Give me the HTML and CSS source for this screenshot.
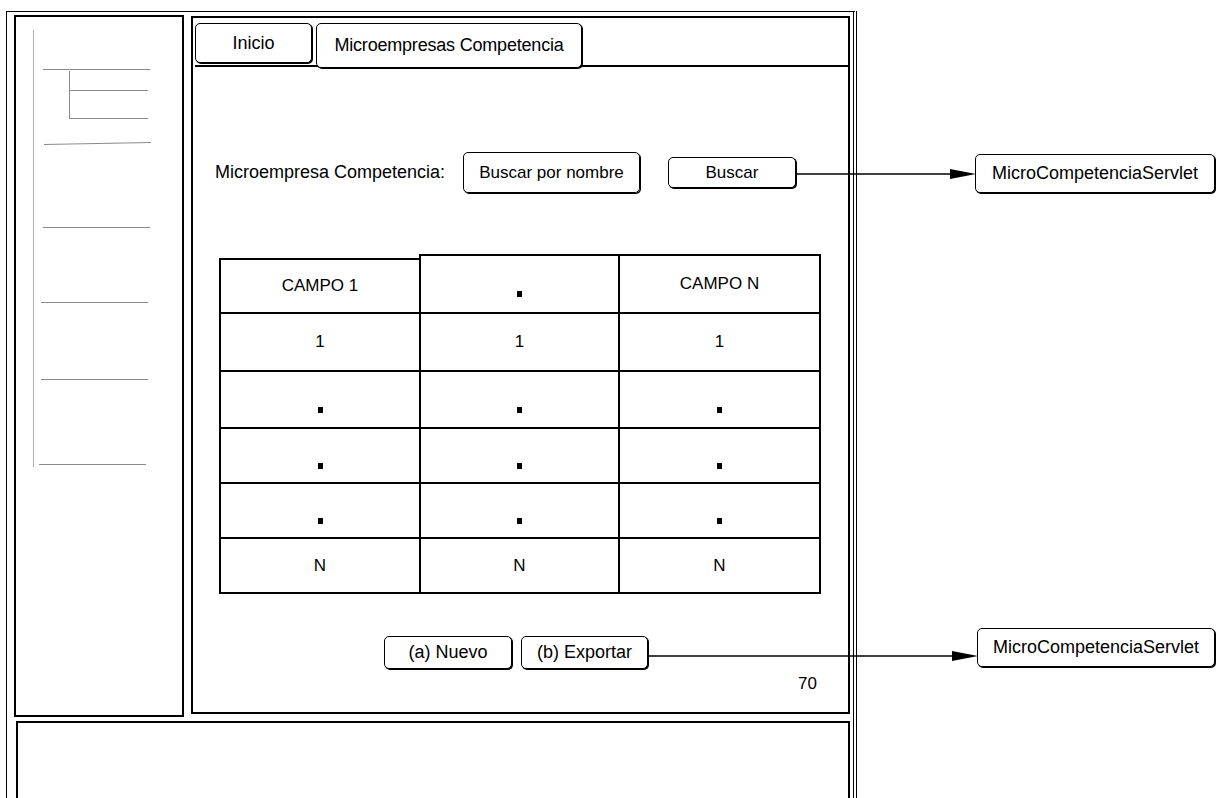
FILE: index.html
```html
<!DOCTYPE html>
<html lang="es">
<head>
    <meta charset="UTF-8">
    <meta name="viewport" content="width=device-width, initial-scale=1.0">
    <title>Microempresas Competencia</title>
    <link rel="stylesheet" href="styles.css">
</head>
<body>
    <div class="page">
        <div class="frame">
            <div class="top">
                <!-- Menu lateral (boceto) -->
                <aside class="sidebar">
                    <svg class="sketch" width="166" height="698" viewBox="16 17 166 698">
                        <path class="trunk" d="M33.5 30 V467"/>
                        <path d="M43 69.5 H150"/>
                        <path d="M69.5 71 V119"/>
                        <path d="M69 90.5 H148"/>
                        <path d="M69 118.5 H148"/>
                        <path d="M44 144.5 L151 142.5"/>
                        <path d="M43 227.5 H150"/>
                        <path d="M41 302.5 H148"/>
                        <path d="M41 379.5 H148"/>
                        <path d="M39 464.5 H146"/>
                    </svg>
                </aside>

                <main class="panel">
                    <nav class="tabs">
                        <span class="tab tab-home">Inicio</span>
                        <span class="tab tab-active">Microempresas Competencia</span>
                    </nav>

                    <div class="search">
                        <label class="search-label">Microempresa Competencia:</label>
                        <span class="field">Buscar por nombre</span>
                        <button class="btn btn-search">Buscar</button>
                    </div>

                    <div class="grid">
                        <div class="col col-first">
                            <div class="cell head">CAMPO 1</div>
                            <div class="cell">1</div>
                            <div class="cell"><i class="dot"></i></div>
                            <div class="cell"><i class="dot"></i></div>
                            <div class="cell"><i class="dot"></i></div>
                            <div class="cell">N</div>
                        </div>
                        <div class="col col-mid">
                            <div class="cell head"><i class="dot"></i></div>
                            <div class="cell">1</div>
                            <div class="cell"><i class="dot"></i></div>
                            <div class="cell"><i class="dot"></i></div>
                            <div class="cell"><i class="dot"></i></div>
                            <div class="cell">N</div>
                        </div>
                        <div class="col col-last">
                            <div class="cell head">CAMPO N</div>
                            <div class="cell">1</div>
                            <div class="cell"><i class="dot"></i></div>
                            <div class="cell"><i class="dot"></i></div>
                            <div class="cell"><i class="dot"></i></div>
                            <div class="cell">N</div>
                        </div>
                    </div>

                    <div class="actions">
                        <button class="btn btn-new">(a) Nuevo</button>
                        <button class="btn btn-export">(b) Exportar</button>
                    </div>

                    <div class="page-num">70</div>
                </main>
            </div>

            <footer class="footer"></footer>
        </div>

        <!-- Flechas hacia el servlet -->
        <svg class="links" width="1218" height="798" viewBox="0 0 1218 798">
            <line x1="796" y1="174" x2="952" y2="174"/>
            <polygon points="950,169 976,174 950,179"/>
            <line x1="649" y1="656" x2="955" y2="656"/>
            <polygon points="952,651 978,656 952,661"/>
        </svg>
        <div class="node node-search">MicroCompetenciaServlet</div>
        <div class="node node-export">MicroCompetenciaServlet</div>
    </div>
</body>
</html>
```

FILE: styles.css
```css
/* Boceto de pantalla */
body {
    margin: 0;
    background: #fff;
    color: #000;
    font-family: "Liberation Sans", Arial, sans-serif;
    font-size: 17px;
}

.page {
    position: relative;
    width: 1218px;
    height: 798px;
    overflow: hidden;
}

.frame {
    margin: 11px 0 0 6px;
    width: 851px;
    height: 820px;
    box-sizing: border-box;
    border-top: 1px solid #000;
    border-left: 1px solid #000;
    border-right: 4px double #000;
    padding: 3px 3px 0 7px;
}

.top {
    display: flex;
    align-items: flex-start;
    gap: 7px;
}

.sidebar {
    width: 170px;
    height: 702px;
    box-sizing: border-box;
    border: 2px solid #000;
}

.sketch {
    display: block;
}

.sketch path {
    fill: none;
    stroke: #8a8a8a;
    stroke-width: 1;
}

.sketch .trunk {
    stroke: #b0b0b0;
}

.panel {
    width: 659px;
    height: 698px;
    margin-top: 1px;
    box-sizing: border-box;
    border: 2px solid #000;
    display: flex;
    flex-direction: column;
}

/* Pestañas */
.tabs {
    display: flex;
    align-items: flex-start;
    gap: 4px;
    height: 44px;
    box-sizing: border-box;
    margin: 5px 0 0 2px;
    border-bottom: 2px solid #000;
}

.tab {
    display: flex;
    align-items: center;
    justify-content: center;
    box-sizing: border-box;
    background: #fff;
    border: 1px solid #000;
    border-radius: 5px;
    box-shadow: 1px 1px 0 #000;
    font-size: 18px;
}

.tab-home {
    width: 117px;
    height: 40px;
}

.tab-active {
    width: 266px;
    height: 45px;
    letter-spacing: -0.2px;
}

/* Busqueda */
.search {
    display: flex;
    align-items: center;
    height: 41px;
    margin-top: 85px;
    padding-left: 22px;
}

.search-label {
    width: 248px;
    font-size: 18px;
}

.field {
    display: flex;
    align-items: center;
    justify-content: center;
    width: 177px;
    height: 41px;
    box-sizing: border-box;
    border: 1px solid #000;
    border-radius: 5px;
    box-shadow: 1px 1px 0 #000;
}

.btn {
    font: inherit;
    color: #000;
    background: #fff;
    padding: 0;
    box-sizing: border-box;
    border: 1px solid #000;
    border-radius: 5px;
    box-shadow: 1px 1px 0 #000;
}

.btn-search {
    width: 128px;
    height: 31px;
    margin-left: 28px;
}

/* Tabla */
.grid {
    display: flex;
    align-items: flex-start;
    margin: 61px 0 0 26px;
}

.col {
    display: flex;
    flex-direction: column;
}

.col-first {
    width: 202px;
    margin-top: 4px;
}

.col-mid {
    width: 201px;
    margin-left: -2px;
}

.col-last {
    width: 203px;
    margin-left: -2px;
}

.cell {
    display: flex;
    align-items: center;
    justify-content: center;
    box-sizing: border-box;
    height: 57px;
    margin-top: -2px;
    border: 2px solid #000;
}

.cell.head {
    height: 60px;
    margin-top: 0;
}

.col-first .cell.head {
    height: 56px;
}

.cell:nth-child(2) {
    height: 60px;
}

.cell:nth-child(3) {
    height: 59px;
}

.dot {
    display: block;
    width: 5px;
    height: 6px;
    margin-top: 20px;
    background: #000;
}

/* Acciones */
.actions {
    display: flex;
    margin-top: 42px;
    padding-left: 191px;
}

.actions .btn {
    height: 33px;
    font-size: 18px;
}

.btn-new {
    width: 128px;
}

.btn-export {
    width: 127px;
    margin-left: 9px;
}

.page-num {
    margin-top: 5px;
    padding-right: 31px;
    line-height: 20px;
    text-align: right;
}

.footer {
    width: 834px;
    height: 120px;
    margin: 4px 0 0 2px;
    box-sizing: border-box;
    border: 2px solid #000;
}

/* Diagrama: flechas y servlet */
.links {
    position: absolute;
    left: 0;
    top: 0;
    pointer-events: none;
}

.links line {
    stroke: #000;
    stroke-width: 1.5;
}

.links polygon {
    fill: #000;
}

.node {
    position: absolute;
    display: flex;
    align-items: center;
    justify-content: center;
    height: 39px;
    box-sizing: border-box;
    background: #fff;
    border: 1px solid #000;
    border-radius: 5px;
    box-shadow: 1px 1px 0 #000;
    font-size: 18px;
}

.node-search {
    left: 975px;
    top: 154px;
    width: 240px;
}

.node-export {
    left: 977px;
    top: 628px;
    width: 238px;
}
```
